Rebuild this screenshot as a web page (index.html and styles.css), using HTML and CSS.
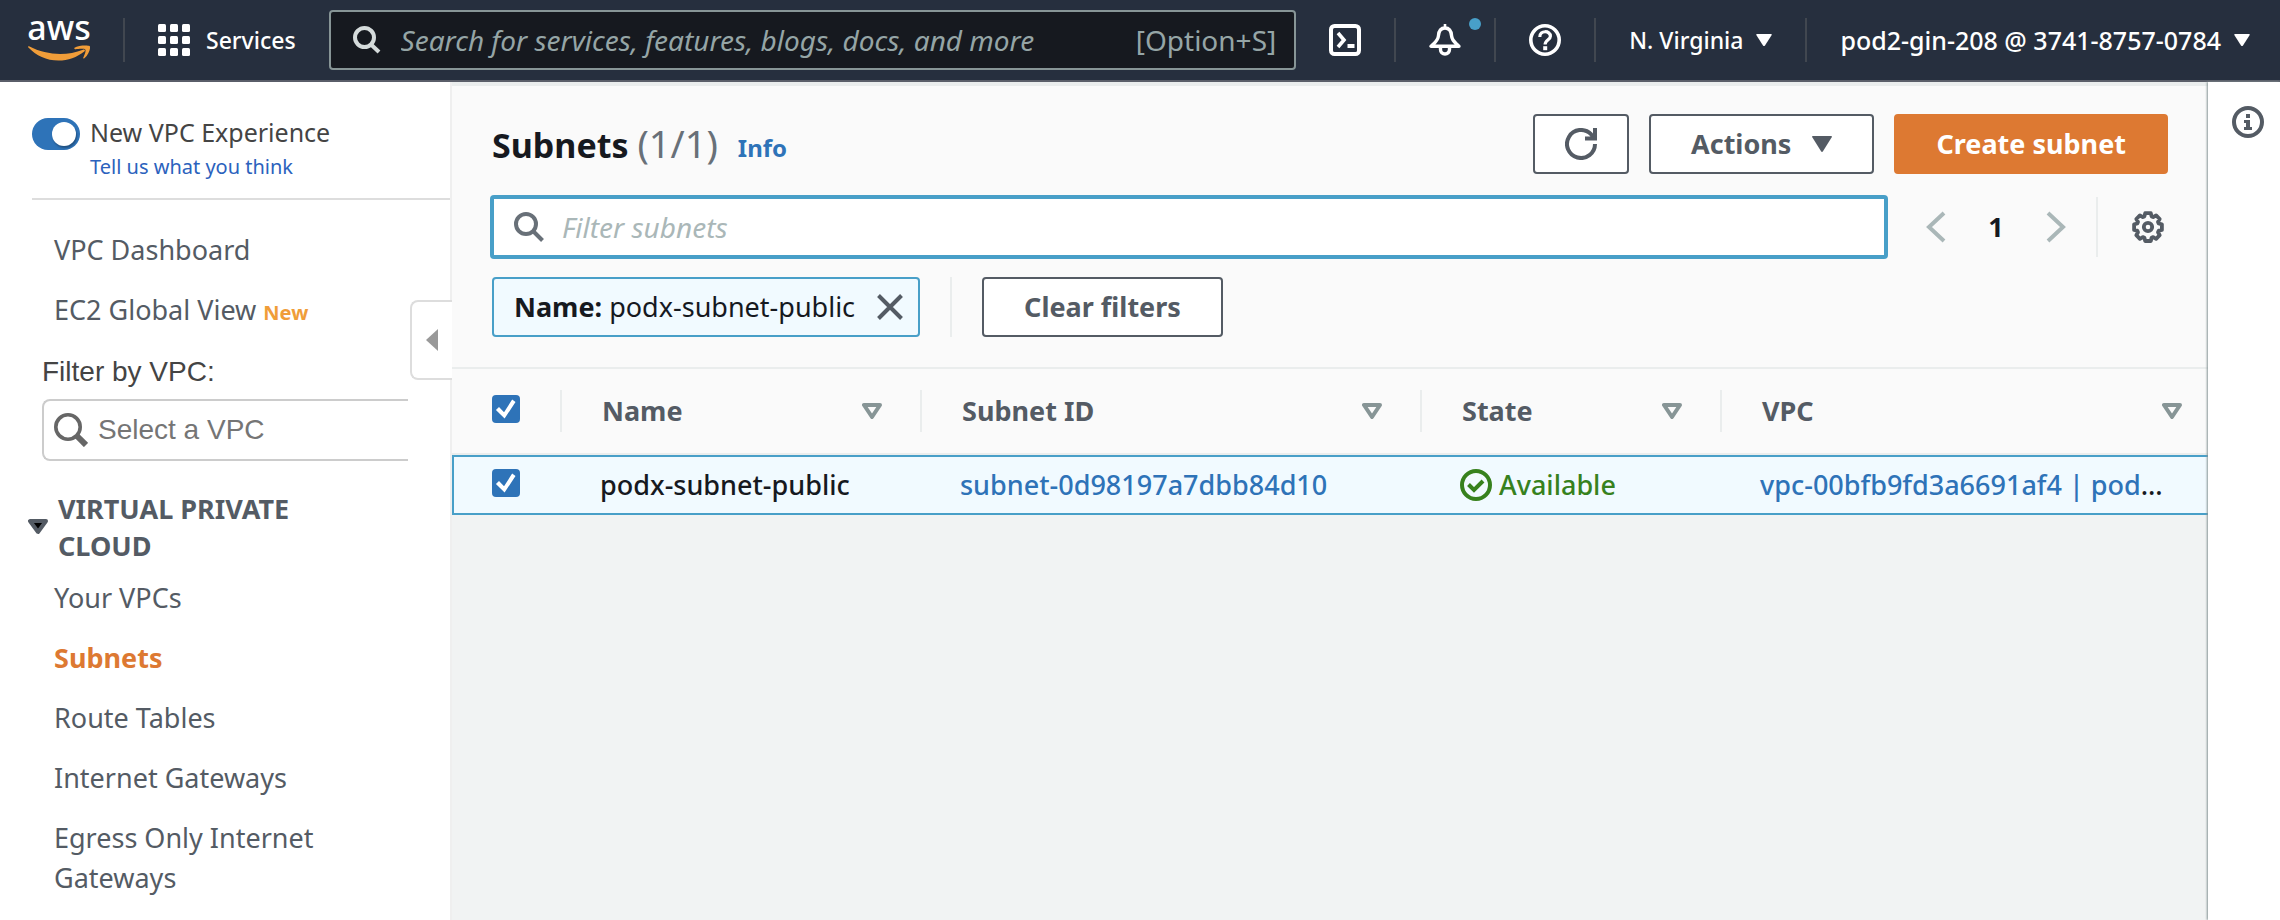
FILE: index.html
```html
<!DOCTYPE html>
<html lang="en">
<head>
<meta charset="utf-8">
<meta name="viewport" content="width=device-width, initial-scale=1">
<title>Subnets | VPC Console</title>
<link rel="stylesheet" href="styles.css">
</head>
<body>
<header class="topbar">
  <a class="logo" href="#" aria-label="AWS home">
    <span class="logo-text">aws</span>
    <svg class="logo-smile" viewBox="0 0 62 19" preserveAspectRatio="none" aria-hidden="true"><path d="M1 1.500C19 12.500 39 13 55 5.500c1.500-.6 2.600 1 1.300 2.200C49 14.500 40 18.500 30.500 18.500 18.500 18.500 8 12.500.4 3-.4 2 .2 1 1 1.500z"/><path d="M46.500 3.200C50 .4 60 .2 61.600 1.300c1.400 1-.3 9.700-5.200 14.300-.8.700-1.500.300-1.200-.5 1-2.700 3.200-8.200 2-9.700-1.100-1.400-6.800-.7-9.500-.4-1 .1-1.800-.9-1.200-1.800z"/></svg>
  </a>
  <span class="rule"></span>
  <button class="bar-btn services" type="button">
    <svg class="icon" viewBox="0 0 32 32" fill="#fff" aria-hidden="true"><rect width="8" height="8" rx="1.500"/><rect x="12" width="8" height="8" rx="1.500"/><rect x="24" width="8" height="8" rx="1.500"/><rect y="12" width="8" height="8" rx="1.500"/><rect x="12" y="12" width="8" height="8" rx="1.500"/><rect x="24" y="12" width="8" height="8" rx="1.500"/><rect y="24" width="8" height="8" rx="1.500"/><rect x="12" y="24" width="8" height="8" rx="1.500"/><rect x="24" y="24" width="8" height="8" rx="1.500"/></svg>
    Services
  </button>
  <label class="global-search">
    <svg class="search-icon" viewBox="0 0 28 28" fill="none" stroke="#d5dbdb" stroke-width="4" aria-hidden="true"><circle cx="11.500" cy="11.500" r="9.500"/><path d="M18 18.500l8 7.500"/></svg>
    <input type="text" aria-label="Search" placeholder="Search for services, features, blogs, docs, and more">
    <span class="shortcut">[Option+S]</span>
  </label>
  <button class="bar-btn" type="button" aria-label="CloudShell">
    <svg class="icon" viewBox="0 0 32 32" fill="none" stroke="#fff" stroke-width="4" aria-hidden="true"><rect x="2" y="2" width="28" height="28" rx="3.500"/><path d="M9 9l6 7-6 7" stroke-width="3.600"/><path d="M18.500 22h7" stroke-width="4"/></svg>
  </button>
  <span class="rule"></span>
  <button class="bar-btn bell" type="button" aria-label="Notifications">
    <svg class="icon" viewBox="0 0 32 32" fill="none" stroke="#fff" stroke-width="3.400" stroke-linejoin="round" aria-hidden="true"><path d="M16 0v4" stroke-width="2.600"/><path d="M16 4c-4.500 0-6.300 3.500-6.600 8C9 17 5.500 18.500 2 22.300h28C26.500 18.500 23 17 22.600 12 22.300 7.500 20.500 4 16 4z"/><path d="M11.500 23.500v2a4.500 4.500 0 0 0 9 0v-2"/></svg>
    <span class="dot"></span>
  </button>
  <span class="rule"></span>
  <button class="bar-btn" type="button" aria-label="Help">
    <svg class="icon" viewBox="0 0 32 32" fill="none" stroke="#fff" stroke-width="3.600" aria-hidden="true"><circle cx="16" cy="16" r="14.200"/><path d="M10.800 13c0-7.200 10.600-6.600 10.600-.8 0 3.600-5.300 3.500-5.300 8.300" stroke-width="3.200"/><path d="M14.200 22.200h4v4h-4z" fill="#fff" stroke="none"/></svg>
  </button>
  <span class="rule"></span>
  <button class="bar-btn" type="button">N. Virginia
    <svg class="caret" viewBox="0 0 16 12" aria-hidden="true"><path d="M1 0h14q1.300 0 .7 1L9 11.500q-1 1-2 0L.3 1Q-.3 0 1 0z"/></svg>
  </button>
  <span class="rule"></span>
  <button class="bar-btn account" type="button">pod2-gin-208 @ 3741-8757-0784
    <svg class="caret" viewBox="0 0 16 12" aria-hidden="true"><path d="M1 0h14q1.300 0 .7 1L9 11.500q-1 1-2 0L.3 1Q-.3 0 1 0z"/></svg>
  </button>
</header>

<div class="shell">
  <aside class="sidebar">
    <div class="experience">
      <input class="toggle" type="checkbox" id="experience" role="switch" checked>
      <div class="experience-text">
        <label for="experience">New VPC Experience</label>
        <a href="#">Tell us what you think</a>
      </div>
    </div>
    <nav class="side-nav">
      <a class="side-link" href="#">VPC Dashboard</a>
      <a class="side-link" href="#">EC2 Global View <span class="new">New</span></a>
      <label class="filter-label" for="vpc-filter">Filter by VPC:</label>
      <div class="vpc-select">
        <svg class="vpc-icon" viewBox="0 0 34 34" fill="none" stroke="#666" aria-hidden="true"><circle cx="14" cy="14" r="12.200" stroke-width="3.600"/><path d="M22.500 22.500l9.500 9.500" stroke-width="6"/></svg>
        <input id="vpc-filter" type="text" placeholder="Select a VPC">
      </div>
      <button class="group" type="button" aria-expanded="true">
        <svg class="group-caret" viewBox="0 0 20 16" aria-hidden="true"><path d="M2 2h16l-8 11z" fill="#000" stroke="#545b64" stroke-width="4" stroke-linejoin="round"/></svg>
        <span>VIRTUAL PRIVATE CLOUD</span>
      </button>
      <a class="side-link" href="#">Your VPCs</a>
      <a class="side-link current" href="#" aria-current="page">Subnets</a>
      <a class="side-link" href="#">Route Tables</a>
      <a class="side-link" href="#">Internet Gateways</a>
      <a class="side-link" href="#">Egress Only Internet Gateways</a>
    </nav>
    <button class="collapse" type="button" aria-label="Collapse navigation">
      <svg viewBox="0 0 12 22" aria-hidden="true"><path d="M12 0v22L0 11z" fill="#999"/></svg>
    </button>
  </aside>

  <main class="main">
    <section class="panel">
      <div class="title-row">
        <h1>Subnets <span class="count">(1/1)</span></h1>
        <a class="info" href="#">Info</a>
        <div class="actions">
          <button class="btn btn-icon" type="button" aria-label="Refresh">
            <svg class="icon" viewBox="0 0 32 32" fill="none" stroke="#545b64" stroke-width="4" aria-hidden="true"><path d="M30 16A14 14 0 1 1 26 6.200l3 4.300"/><path d="M30 0v10.500H20"/></svg>
          </button>
          <button class="btn" type="button">Actions
            <svg class="btn-caret" viewBox="0 0 20 16" aria-hidden="true"><path d="M1 0h18q1.500 0 .7 1.300L11 15.300q-1 1.300-2 0L.3 1.300Q-.5 0 1 0z"/></svg>
          </button>
          <button class="btn btn-primary" type="button">Create subnet</button>
        </div>
      </div>
      <div class="filter-row">
        <label class="filter-box">
          <svg class="filter-icon" viewBox="0 0 30 30" fill="none" stroke="#687078" stroke-width="4" aria-hidden="true"><circle cx="12" cy="12" r="10"/><path d="M19 19l9.500 9.500"/></svg>
          <input type="text" aria-label="Filter subnets" placeholder="Filter subnets">
        </label>
        <div class="pager">
          <button class="page-btn" type="button" aria-label="Previous page"><svg class="chev" viewBox="0 0 20 32" aria-hidden="true"><path d="M18 2L3 16l15 14"/></svg></button>
          <button class="page-btn" type="button" aria-current="page">1</button>
          <button class="page-btn" type="button" aria-label="Next page"><svg class="chev" viewBox="0 0 20 32" aria-hidden="true"><path d="M2 2l15 14L2 30"/></svg></button>
        </div>
        <button class="page-btn gear" type="button" aria-label="Preferences">
          <svg class="icon" viewBox="0 0 32 32" fill="none" stroke="#545b64" stroke-width="3.800" stroke-linejoin="round" aria-hidden="true"><path d="M13.200 2.200h5.600l.8 3.200 1.600.7 2.900-1.700 3.600 3.600-1.700 2.900.7 1.600 3.200.8v5.600l-3.200.8-.7 1.600 1.700 2.900-3.600 3.600-2.900-1.700-1.600.7-.8 3.200h-5.600l-.8-3.200-1.600-.7-2.900 1.700L4.300 24.200 6 21.300l-.7-1.600-3.200-.8v-5.600l3.200-.8.700-1.600L4.300 8l3.600-3.600 2.900 1.700 1.600-.7z"/><circle cx="16" cy="16" r="4.200"/></svg>
        </button>
      </div>
      <div class="token-row">
        <div class="token"><span><b>Name:</b> podx-subnet-public</span>
          <button class="token-close" type="button" aria-label="Remove filter"><svg viewBox="0 0 26 26" aria-hidden="true"><path d="M1.500 1.500l23 23M24.500 1.500l-23 23" stroke="#545b64" stroke-width="4"/></svg></button>
        </div>
        <button class="btn clear" type="button">Clear filters</button>
      </div>
    </section>

    <table class="grid">
      <colgroup><col class="c-check"><col class="c-name"><col class="c-id"><col class="c-state"><col></colgroup>
      <thead>
        <tr>
          <th><input class="check" type="checkbox" aria-label="Select all" checked></th>
          <th><div class="head">Name <svg class="sort" viewBox="0 0 20 16" aria-hidden="true"><path d="M2 2h16l-8 12z"/></svg></div></th>
          <th><div class="head">Subnet ID <svg class="sort" viewBox="0 0 20 16" aria-hidden="true"><path d="M2 2h16l-8 12z"/></svg></div></th>
          <th><div class="head">State <svg class="sort" viewBox="0 0 20 16" aria-hidden="true"><path d="M2 2h16l-8 12z"/></svg></div></th>
          <th><div class="head">VPC <svg class="sort" viewBox="0 0 20 16" aria-hidden="true"><path d="M2 2h16l-8 12z"/></svg></div></th>
        </tr>
      </thead>
      <tbody>
        <tr>
          <td><input class="check" type="checkbox" aria-label="Select podx-subnet-public" checked></td>
          <td>podx-subnet-public</td>
          <td><a href="#">subnet-0d98197a7dbb84d10</a></td>
          <td><span class="status"><svg class="icon" viewBox="0 0 32 32" fill="none" stroke="#37811d" stroke-width="4" aria-hidden="true"><circle cx="16" cy="16" r="14"/><path d="M8.500 15.500l5.500 5.500 9-9"/></svg>Available</span></td>
          <td><a href="#">vpc-00bfb9fd3a6691af4 | podx-vpc</a></td>
        </tr>
      </tbody>
    </table>
  </main>

  <aside class="rail">
    <button class="bar-btn" type="button" aria-label="Open help panel">
      <svg class="icon" viewBox="0 0 32 32" fill="none" stroke="#545b64" aria-hidden="true"><circle cx="16" cy="16" r="14" stroke-width="4"/><path d="M14 8h4v4h-4zM12 14h6v7h2v3h-8v-3h2v-4h-2z" fill="#545b64" stroke="none"/></svg>
    </button>
  </aside>
</div>
</body>
</html>
```

FILE: styles.css
```css
* { box-sizing: border-box; }

body {
  margin: 0;
  min-height: 100vh;
  display: flex;
  flex-direction: column;
  font-family: "Noto Sans", "Open Sans", sans-serif;
  font-size: 27px;
  line-height: 40px;
  color: #16191f;
  background: #f1f3f3;
}

button, input { font: inherit; color: inherit; }
button { margin: 0; padding: 0; border: 0; background: none; cursor: pointer; }
input[type="text"] { min-width: 0; padding: 0; border: 0; outline: 0; background: none; }
a { color: #2e73b8; text-decoration: none; }
svg { display: block; flex: none; }
.icon { width: 32px; height: 32px; }

/* Top bar */
.topbar {
  display: flex;
  align-items: center;
  gap: 33px;
  height: 82px;
  padding: 0 30px 0 28px;
  background: #262f3e;
  border-bottom: 2px solid #5a5e69;
  color: #fff;
  font-size: 23px;
  font-weight: 500;
}
.rule { width: 2px; height: 44px; background: #414750; }
.logo {
  display: flex;
  flex-direction: column;
  align-items: center;
  width: 62px;
  padding-bottom: 10px;
  color: #fff;
}
.logo-text { font-size: 34px; line-height: 36px; }
.logo-smile { width: 62px; height: 16px; fill: #f09d39; }
.bar-btn { display: flex; align-items: center; gap: 13px; flex: none; white-space: nowrap; }
.services { gap: 16px; }
.account { font-size: 25px; }
.caret { width: 16px; height: 12px; fill: #fff; }
.bell { position: relative; }
.dot {
  position: absolute;
  top: -6px;
  right: -20px;
  width: 12px;
  height: 12px;
  border-radius: 50%;
  background: #489fc8;
}
.global-search {
  display: flex;
  align-items: center;
  flex: 1;
  min-width: 0;
  height: 60px;
  padding: 0 18px 0 22px;
  border: 2px solid #879596;
  border-radius: 4px;
  background: #16191f;
  color: #95a5a6;
  font-size: 28px;
  font-weight: 400;
}
.search-icon { width: 28px; height: 28px; margin-right: 20px; }
.global-search input { flex: 1; }
.global-search input::placeholder { color: #95a5a6; font-style: italic; opacity: 1; }

/* Page shell */
.shell { display: flex; flex: 1; }

.sidebar {
  position: relative;
  flex: none;
  width: 452px;
  background: #fff;
  border-right: 2px solid #efefef;
}
.experience {
  display: flex;
  gap: 10px;
  margin-left: 32px;
  padding: 30px 0 16px;
  border-bottom: 2px solid #ddd;
  color: #444;
  font-size: 25px;
}
.experience-text { display: flex; flex-direction: column; line-height: 40px; }
.experience-text a { color: #2b62bd; font-size: 20px; line-height: 30px; }
.toggle {
  appearance: none;
  flex: none;
  width: 48px;
  height: 32px;
  margin: 6px 0 0;
  padding: 4px;
  border-radius: 16px;
  background: #2e73b8;
}
.toggle::before {
  content: "";
  display: block;
  width: 24px;
  height: 24px;
  margin-left: auto;
  border-radius: 50%;
  background: #fff;
  box-shadow: 1px 2px 2px rgba(0, 0, 0, 0.3);
}

.side-nav { display: flex; flex-direction: column; padding: 20px 42px 0 28px; }
.side-link { padding: 10px 80px 10px 26px; color: #545b64; }
.side-link.current { color: #dd7932; font-weight: 700; }
.new { color: #f09d39; font-size: 20px; font-weight: 700; }
.filter-label {
  margin: 9px 0 7px 14px;
  color: #444;
  font-family: "Liberation Sans", Arial, sans-serif;
  font-size: 28px;
}
.vpc-select {
  display: flex;
  align-items: center;
  gap: 10px;
  height: 62px;
  margin-left: 14px;
  padding-left: 10px;
  border: 2px solid #ccc;
  border-right: 0;
  border-radius: 8px 0 0 8px;
  font-family: "Liberation Sans", Arial, sans-serif;
  font-size: 28px;
}
.vpc-icon { width: 34px; height: 34px; }
.vpc-select input { flex: 1; }
.vpc-select input::placeholder { color: #757575; opacity: 1; }
.group {
  display: flex;
  align-items: center;
  gap: 10px;
  margin: 29px 80px 4px 0;
  color: #545b64;
  font-weight: 700;
  line-height: 37px;
  text-align: left;
}
.group-caret { width: 20px; height: 16px; }
.collapse {
  position: absolute;
  top: 218px;
  right: -2px;
  display: flex;
  align-items: center;
  width: 42px;
  height: 80px;
  padding-left: 14px;
  border: 2px solid #ddd;
  border-right: 0;
  border-radius: 8px 0 0 8px;
  background: #fff;
}
.collapse svg { width: 12px; height: 22px; }

/* Main panel */
.main { flex: 1; min-width: 0; }
.panel {
  display: flex;
  flex-direction: column;
  padding: 28px 40px 30px;
  border-top: 4px solid #eaeded;
  border-bottom: 2px solid #eaeded;
  background: #fafafa;
}
.title-row { display: flex; align-items: center; }
h1 { margin: 0; font-size: 34px; line-height: 48px; font-weight: 700; }
.count { color: #687078; font-size: 38px; font-weight: 400; }
.info { margin: 7px 0 0 20px; font-size: 24px; font-weight: 700; }
.actions { display: flex; gap: 20px; margin-left: auto; }
.btn {
  display: flex;
  align-items: center;
  justify-content: center;
  gap: 21px;
  height: 60px;
  padding: 0 40px;
  border: 2px solid #545b64;
  border-radius: 4px;
  background: #fff;
  color: #545b64;
  font-weight: 700;
  white-space: nowrap;
}
.btn-icon { width: 96px; padding: 0; }
.btn-caret { width: 20px; height: 16px; fill: #545b64; }
.btn-primary { border-color: #dd7932; background: #dd7932; color: #fff; }

.filter-row { display: flex; align-items: center; margin-top: 23px; }
.filter-box {
  display: flex;
  align-items: center;
  gap: 18px;
  flex: 1;
  min-width: 0;
  height: 60px;
  padding: 0 20px;
  border: 2px solid #489fc8;
  border-radius: 2px;
  box-shadow: 0 0 0 2px #489fc8;
  background: #fff;
  font-size: 28px;
}
.filter-icon { width: 30px; height: 30px; }
.filter-box input { flex: 1; }
.filter-box input::placeholder { color: #aab7b8; font-style: italic; opacity: 1; }
.pager {
  display: flex;
  align-items: center;
  gap: 20px;
  height: 60px;
  margin-left: 30px;
  padding-right: 20px;
  border-right: 2px solid #eaeded;
}
.page-btn {
  display: flex;
  align-items: center;
  justify-content: center;
  width: 40px;
  height: 40px;
  font-weight: 700;
}
.gear { margin-left: 30px; }
.chev { width: 20px; height: 32px; fill: none; stroke: #aab7b8; stroke-width: 4; }

.token-row { display: flex; margin-top: 20px; }
.token {
  display: flex;
  align-items: center;
  gap: 22px;
  height: 60px;
  padding: 0 15px 0 20px;
  border: 2px solid #489fc8;
  border-radius: 4px;
  background: #f1faff;
}
.token-close svg { width: 26px; height: 26px; }
.clear { position: relative; margin-left: 62px; }
.clear::before {
  content: "";
  position: absolute;
  top: -2px;
  left: -34px;
  width: 2px;
  height: 60px;
  background: #eaeded;
}

/* Subnet table */
.grid { width: 100%; table-layout: fixed; border-spacing: 0; }
.c-check { width: 108px; }
.c-name { width: 360px; }
.c-id { width: 500px; }
.c-state { width: 300px; }
.grid th {
  height: 86px;
  padding: 0;
  border-bottom: 2px solid #eaeded;
  background: #fafafa;
  color: #545b64;
  text-align: left;
}
.grid th:first-child { padding-left: 40px; }
.head {
  display: flex;
  align-items: center;
  justify-content: space-between;
  height: 42px;
  padding: 0 38px 0 40px;
  border-left: 2px solid #eaeded;
}
.grid th:last-child .head { padding-right: 26px; }
.sort { width: 20px; height: 16px; fill: none; stroke: #879596; stroke-width: 4; stroke-linejoin: round; }
.grid td {
  height: 60px;
  padding: 0 32px 0 40px;
  border: 2px solid #489fc8;
  border-width: 2px 0;
  background: #f1faff;
  font-weight: 500;
  overflow: hidden;
  text-overflow: ellipsis;
  white-space: nowrap;
}
.grid td:first-child { padding: 0 0 0 38px; border-left-width: 2px; }
.check {
  appearance: none;
  display: block;
  width: 28px;
  height: 28px;
  margin: 0 0 4px;
  border-radius: 4px;
  background: #2e73b8;
}
.check::before {
  content: "";
  display: block;
  width: 28px;
  height: 28px;
  background: #fff;
  clip-path: polygon(14% 54%, 25% 43%, 43% 62%, 72% 16%, 84% 25%, 45% 84%);
}
.status { display: flex; align-items: center; gap: 7px; color: #37811d; }

/* Help rail */
.rail {
  display: flex;
  align-items: flex-start;
  justify-content: center;
  flex: none;
  width: 72px;
  padding: 24px 0 0 8px;
  background: #fff;
  box-shadow: -1px 0 2px #879596;
  z-index: 1;
}
```
